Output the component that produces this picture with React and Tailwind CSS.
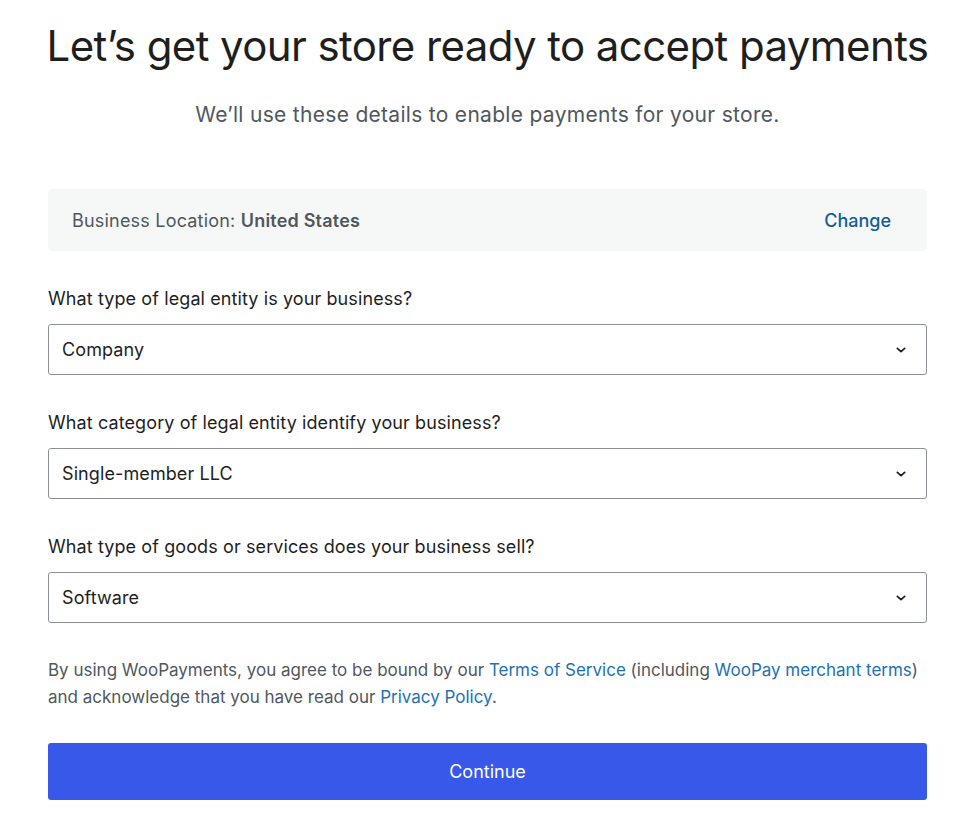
function Chevron() {
  return (
    <svg width="16" height="16" viewBox="0 0 24 24" fill="none" stroke="#1e1e1e" strokeWidth="2.6" strokeLinecap="round" strokeLinejoin="round">
      <path d="M6.5 9.5l5.5 5 5.5-5" />
    </svg>
  )
}

function SelectField({ label, value }) {
  return (
    <div className="mt-[36px]">
      <label className="block text-[18px] leading-[24px] tracking-[0.1px] text-[#1e1e1e]">{label}</label>
      <div className="mt-[13px] flex h-[51px] items-center justify-between rounded-[3px] border border-[#8c8f94] bg-white pl-[13px] pr-[17px]">
        <span className="text-[18px] tracking-[0.1px] text-[#1e1e1e]">{value}</span>
        <Chevron />
      </div>
    </div>
  )
}

export default function App() {
  return (
    <div className="min-h-screen bg-white pb-[38px] font-['Inter',sans-serif] antialiased">
      <div className="ml-[48px] w-[879px] pt-[21px]">
        <h1 className="-mx-[20px] whitespace-nowrap text-center text-[42px] leading-[50px] tracking-[-0.6px] text-[#1e1e1e]">
          Let’s get your store ready to accept payments
        </h1>
        <p className="mt-[30px] text-center text-[21px] leading-[28px] tracking-[0.3px] text-[#50575e]">
          We’ll use these details to enable payments for your store.
        </p>

        <div className="mt-[60px] flex h-[62px] items-center justify-between rounded-[4px] bg-[#f6f7f7] pl-[24px] pr-[36px]">
          <span className="text-[18px] tracking-[0.2px] text-[#50575e]">
            Business Location: <strong className="font-semibold">United States</strong>
          </span>
          <a href="#" className="text-[18px] font-medium text-[#135e96]">Change</a>
        </div>

        <SelectField label="What type of legal entity is your business?" value="Company" />
        <SelectField label="What category of legal entity identify your business?" value="Single-member LLC" />
        <SelectField label="What type of goods or services does your business sell?" value="Software" />

        <p className="mt-[34px] text-[17px] leading-[27px] text-[#50575e]">
          By using WooPayments, you agree to be bound by our{' '}
          <a href="#" className="text-[#2271b1]">Terms of Service</a> (including{' '}
          <a href="#" className="text-[#2271b1]">WooPay merchant terms</a>) and acknowledge that you have read our{' '}
          <a href="#" className="text-[#2271b1]">Privacy Policy</a>.
        </p>

        <button className="mt-[32px] flex h-[57px] w-full items-center justify-center rounded-[3px] bg-[#3858e9] text-[18px] text-white">
          Continue
        </button>
      </div>
    </div>
  )
}
